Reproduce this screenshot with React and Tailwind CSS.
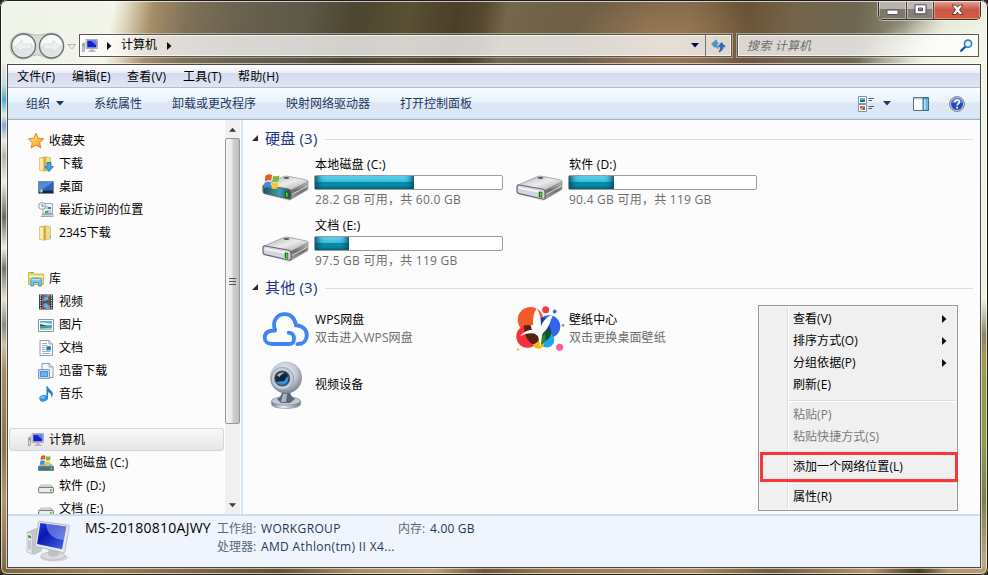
import clsx from "clsx";

const favorites = [
    { icon: DownloadFolderIcon, label: "下载" },
    { icon: DesktopIcon, label: "桌面" },
    { icon: RecentIcon, label: "最近访问的位置" },
    { icon: FolderIcon, label: "2345下载" },
];

const libraries = [
    { icon: VideoIcon, label: "视频" },
    { icon: PictureIcon, label: "图片" },
    { icon: DocumentIcon, label: "文档" },
    { icon: XunleiIcon, label: "迅雷下载" },
    { icon: MusicIcon, label: "音乐" },
];

const drives = [
    { icon: SmallSystemDriveIcon, label: "本地磁盘 (C:)" },
    { icon: SmallDriveIcon, label: "软件 (D:)" },
    { icon: SmallDriveIcon, label: "文档 (E:)" },
];

const disks = [
    { name: "本地磁盘 (C:)", info: "28.2 GB 可用，共 60.0 GB", used: 53, system: true },
    { name: "软件 (D:)", info: "90.4 GB 可用，共 119 GB", used: 24.2 },
    { name: "文档 (E:)", info: "97.5 GB 可用，共 119 GB", used: 18.3 },
];

const others = [
    { icon: CloudIcon, name: "WPS网盘", info: "双击进入WPS网盘" },
    { icon: WallpaperIcon, name: "壁纸中心", info: "双击更换桌面壁纸" },
    { icon: WebcamIcon, name: "视频设备" },
];

/* ---------- small icons ---------- */

function ComputerIcon() {
    return (
        <svg width="16" height="16" viewBox="0 0 16 16">
            <path d="M.5 5.5l2-.7v8.4l-2 .5z" fill="#d5d8da" stroke="#8b9094" strokeWidth=".7" />
            <path d="M1 6.6h1v1.6H1z" fill="#3fae2a" />
            <path d="M4 1.5h11.5v9H4z" fill="#e3e5e8" stroke="#9aa0a8" strokeWidth=".8" />
            <path d="M5.2 2.6h9.2v6.8H5.2z" fill="#1224c8" />
            <path d="M8.5 2.6h5.9v5z" fill="#5f82ee" />
            <path d="M8.5 10.8h3v1.7h-3z" fill="#b4b8bd" />
            <path d="M6.5 12.5h7v1.2h-7z" fill="#9da2a8" />
        </svg>
    );
}

function StarIcon() {
    return (
        <svg width="16" height="16" viewBox="0 0 16 16">
            <defs>
                <linearGradient id="star" x1="0" y1="0" x2="1" y2="1">
                    <stop offset="0" stopColor="#ffe9a0" />
                    <stop offset=".5" stopColor="#ffc44a" />
                    <stop offset="1" stopColor="#f58a1c" />
                </linearGradient>
            </defs>
            <path d="M8 .3l2.2 5 5.5.6-4.1 3.6 1.2 5.5L8 12.2l-4.8 2.8 1.2-5.5L.3 5.9l5.5-.6z" fill="url(#star)" stroke="#e0761a" strokeWidth=".9" strokeLinejoin="round" />
        </svg>
    );
}

function FolderShape() {
    return (
        <>
            <path d="M1.5 1.8L8 .8l4.5 1v12L6 15.2l-4.5-1z" fill="#e3c565" stroke="#c5a445" strokeWidth=".6" />
            <path d="M1.7 2L5.5 3v11.7l-3.8-.8z" fill="#f9eba8" />
            <path d="M5.6 3L8 1.2V14l-2.4.9z" fill="#d0ac48" />
            <path d="M8 1.6h4.3v11.9L8 14.4z" fill="#f1dc8a" />
        </>
    );
}

function FolderIcon() {
    return (
        <svg width="16" height="16" viewBox="0 0 16 16">
            <FolderShape />
            <path d="M11.8 10.5h1v3h-1z" fill="#6fb7dc" />
        </svg>
    );
}

function DownloadFolderIcon() {
    return (
        <svg width="16" height="16" viewBox="0 0 16 16">
            <FolderShape />
            <path d="M9 6.5h4v4.2h2.3L11 15.6l-4.2-4.9H9z" fill="#3ba5e6" stroke="#1b6bac" strokeWidth=".8" />
        </svg>
    );
}

function DesktopIcon() {
    return (
        <svg width="16" height="16" viewBox="0 0 16 16">
            <path d="M.5 2.5h15v12H.5z" fill="#2c62be" stroke="#7d8ba0" />
            <path d="M1 3h14L4 11H1z" fill="#4e8be0" />
            <path d="M1 11.5h14V14H1z" fill="#20262f" />
            <circle cx="3" cy="12" r="1.7" fill="#6ac0e8" />
            <path d="M3 11h1.5v1.5H3z" fill="#f3d34a" />
        </svg>
    );
}

function RecentIcon() {
    return (
        <svg width="16" height="16" viewBox="0 0 16 16">
            <path d="M5 1.5h9.5v11H5z" fill="#eff4f8" stroke="#8d979f" strokeWidth=".8" />
            <path d="M6 4h4v3H6zM8 8h5v3H8z" fill="#a9cfe4" />
            <path d="M10 5h3v2h-3z" fill="#2b85c4" />
            <path d="M7 9h3v2H7z" fill="#4ba65c" />
            <circle cx="4" cy="4" r="3.4" fill="#f7f7f7" stroke="#8c959c" strokeWidth=".9" />
            <path d="M4 2v2.2h2" stroke="#666" strokeWidth=".8" fill="none" />
            <path d="M4 12.2l1.2-1.3h9L15.5 13v2H2.5z" fill="#a2a8ab" />
            <path d="M3 13h12v.8H3z" fill="#e4e7e8" />
        </svg>
    );
}

function LibraryIcon() {
    return (
        <svg width="16" height="16" viewBox="0 0 16 16">
            <path d="M.5 1.5h5l1.3 1.6h8.7v10.4H.5z" fill="#eed271" stroke="#cdaa43" strokeWidth=".8" />
            <path d="M1 4.5h14v2H1z" fill="#fbefb2" />
            <path d="M2.5 1.5h3" stroke="#58b947" />
            <path d="M2.8 15V9.5c0-1.6.8-2.4 2.2-2.4h6.2c1.4 0 2.3.8 2.3 2.4V15h-3v-3.5H5.8V15z" fill="#72c3e9" stroke="#3b8fbf" strokeWidth=".8" />
            <path d="M3.5 8.7h9" stroke="#c9ecfb" />
        </svg>
    );
}

function VideoIcon() {
    return (
        <svg width="16" height="16" viewBox="0 0 16 16">
            <path d="M1 .5h14v15H1z" fill="#2b3a46" />
            <path d="M4 1h8v14H4z" fill="#47a7e0" />
            <path d="M4 1h3l2 2 3-1v5H8L4 5zM4 9h8v3l-3 1-1 2H4z" fill="#a6493f" />
            <path d="M6 3h4v3H6zM5 11l3-2 3 3-1 2H7z" fill="#58b5e9" />
            <path d="M4 7.4h8v1.2H4z" fill="#223240" />
            <path d="M2.5 1.2v14M13.5 1.2v14" stroke="#eef3f5" strokeWidth="1.3" strokeDasharray="1.2 1.2" />
        </svg>
    );
}

function PictureIcon() {
    return (
        <svg width="16" height="16" viewBox="0 0 16 16">
            <path d="M.5 2.5h15v12H.5z" fill="#fdfdfd" stroke="#8f979c" />
            <path d="M2 4h12v5H2z" fill="#5db1ea" />
            <path d="M2 6c3-1.4 5 .2 12 1v2H2z" fill="#e4f3f6" />
            <path d="M2 7.2c3 0 5 1.7 12 1.3v1H2z" fill="#1d5c52" />
            <path d="M2 9.3h12V13H2z" fill="#3d968a" />
            <path d="M2 11.5l12-1V13H2z" fill="#93d3d0" />
        </svg>
    );
}

function DocumentIcon() {
    return (
        <svg width="16" height="16" viewBox="0 0 16 16">
            <path d="M2 .5h9l3.5 3.5v11.5H2z" fill="#fdfdfd" stroke="#8a939a" strokeWidth=".9" />
            <path d="M11 .5V4h3.5" fill="#dfe5ea" stroke="#8a939a" strokeWidth=".8" />
            <path d="M4 3.5h5M4 5.5h5M4 7.5h3.5M4 9.5h3.5M4 11.5h8.5M4 13.5h8.5" stroke="#8da6be" strokeWidth=".9" />
            <path d="M8.5 6.2h4.3v4H8.5z" fill="#226ebb" />
            <path d="M8.5 8.7h4.3v1.5H8.5z" fill="#3d8f86" />
        </svg>
    );
}

function XunleiIcon() {
    return (
        <svg width="16" height="16" viewBox="0 0 16 16">
            <path d="M4 .5h7.5L15 4v10.5H4z" fill="#f5f8fb" stroke="#7a95b0" strokeWidth=".9" />
            <path d="M11 .5V4h4" fill="#dfe8f1" stroke="#7a95b0" strokeWidth=".8" />
            <path d="M.6 6.6h10.8v8.8H.6z" fill="#e8f2fb" stroke="#6086ad" strokeWidth=".9" />
            <path d="M2.3 8.4h7.4v5.2H2.3z" fill="#69b2ee" stroke="#2d74b8" strokeWidth=".8" />
        </svg>
    );
}

function MusicIcon() {
    return (
        <svg width="16" height="16" viewBox="0 0 16 16">
            <ellipse cx="5.6" cy="12.3" rx="4.3" ry="3.3" fill="#2b97dd" transform="rotate(-12 5.6 12.3)" />
            <ellipse cx="4.8" cy="11.4" rx="2.2" ry="1.2" fill="#86cbf2" />
            <path d="M8.5.3h1.3c.3 2.8 4.6 4 5 7.2.2 1.7-.4 3-1.6 4.6.6-3.3-.6-5.2-3.2-5.9v6.3H8.5z" fill="#2384cc" />
        </svg>
    );
}

function Flag() {
    return (
        <>
            <path d="M0 1.2C2-.3 3.3-.3 5 .6L4.4 5C2.7 4.2 1.4 4.3-.6 5.6z" fill="#e35a2b" />
            <path d="M5.8.9c1.6.9 3 .8 4.9 0L10 5.3c-1.8.8-3.2.8-4.8 0z" fill="#79b93c" />
            <path d="M-.8 6.5c2-1.3 3.3-1.2 5-.4l-.6 4.4c-1.7-.9-3-.8-5 .4z" fill="#3d8fd6" />
            <path d="M5 6.3c1.6.8 3 .8 4.9 0l-.7 4.4c-1.8.8-3.2.8-4.8 0z" fill="#f6c732" />
        </>
    );
}

function SmallSystemDriveIcon() {
    return (
        <svg width="16" height="16" viewBox="0 0 16 16">
            <path d="M2.5 8.5h11L15.6 12v3.4H.4V12z" fill="#9fb8bf" />
            <path d="M.4 11.5h15.2v4H.4z" fill="#3a7888" stroke="#68747a" strokeWidth=".7" />
            <path d="M12.5 12.5h1.6v2.2h-1.6z" fill="#5edb2f" />
            <g transform="translate(3 .3) scale(.9)">
                <Flag />
            </g>
        </svg>
    );
}

function SmallDriveIcon() {
    return (
        <svg width="16" height="16" viewBox="0 0 16 16">
            <path d="M3 7h10l2.3 3H.7z" fill="#e2e3e4" stroke="#a3a5a7" strokeWidth=".7" />
            <rect x=".6" y="9.4" width="14.8" height="5.4" rx="1.2" fill="#ececee" stroke="#6c6f72" strokeWidth="1" />
            <path d="M12 11h1.6v2.5H12z" fill="#4cc22b" />
        </svg>
    );
}

/* ---------- large icons ---------- */

function DriveIcon({ system }) {
    return (
        <svg width="48" height="30" viewBox="0 0 48 30">
            <defs>
                <linearGradient id="driveTop" x1="0" y1="0" x2="1" y2="1">
                    <stop offset="0" stopColor="#a9aaac" />
                    <stop offset=".5" stopColor="#ececed" />
                    <stop offset="1" stopColor="#9c9d9f" />
                </linearGradient>
                <linearGradient id="driveSide" x1="0" y1="0" x2="0" y2="1">
                    <stop offset="0" stopColor="#c4c5c6" />
                    <stop offset=".5" stopColor="#6c6e70" />
                    <stop offset="1" stopColor="#a3a4a5" />
                </linearGradient>
                <linearGradient id="driveGlass" x1="0" y1="0" x2="1" y2="0">
                    <stop offset="0" stopColor="#23505b" />
                    <stop offset=".6" stopColor="#37a0b3" />
                    <stop offset="1" stopColor="#214851" />
                </linearGradient>
            </defs>
            <path d="M3 22l24 7L47 18l-3-3z" fill="#000" opacity=".12" />
            <path d="M2 13L21 4.8c2-.8 3.6-.8 5.5-.5l17 3.4c2 .5 2.8 1.3 2.5 2.5L30 19z" fill="url(#driveTop)" stroke="#808183" strokeWidth=".6" />
            <path d="M28.5 18.5L46 9.5v6.2c0 1-.4 1.6-1.5 2.2L29 27.2z" fill="url(#driveSide)" stroke="#777" strokeWidth=".5" />
            <path d="M30 22.5L45.5 14" stroke="#e4e5e6" strokeWidth=".9" />
            <path d="M1 14.4c0-1.2.8-1.6 2.3-1.4L26 17c2 .4 3 1 3 2.8v5.4c0 1.7-.8 2.2-2.6 1.8L3 21.6c-1.3-.3-2-.9-2-2.3z" fill={system ? "url(#driveGlass)" : "#d4d5e0"} stroke="#66686b" strokeWidth="1.2" />
            {!system && <path d="M3 15l22 4v2L3 17z" fill="#f4f4fa" />}
            <path d="M22.8 19.5l3.4.5v5.8l-3.4-.8z" fill="#124f0c" />
            <path d="M23.8 20.4l1.8.2v4.4l-1.8-.5z" fill="#58e325" />
            <ellipse cx="24.5" cy="6" rx="2.8" ry="1" fill="#55575a" />
            {system && (
                <g transform="translate(3.5 2.3) scale(1.3)">
                    <Flag />
                </g>
            )}
        </svg>
    );
}

function CloudIcon() {
    return (
        <svg width="48" height="48" viewBox="0 0 48 48" fill="none" stroke="#3f83f5" strokeWidth="3.8" strokeLinecap="round">
            <path d="M13.2 25C9.5 17 15 9.1 22.5 9.1c7 0 10.3 4.6 11.6 11.2 6.9.2 10.9 4.7 10.7 10.2-.2 5.8-4.4 8.5-9.4 8.7" />
            <path d="M13 25.5c-6 0-10.3 2.3-10.3 7.3 0 4 3 6.2 7.3 6.2h17c3 0 5-1.8 5-5.1 0-4.3-2.2-6.1-5.3-6.3" />
        </svg>
    );
}

function WallpaperIcon() {
    return (
        <svg width="49" height="48" viewBox="0 0 49 48">
            <circle cx="14.5" cy="14.8" r="12.8" fill="#f15a29" />
            <circle cx="33" cy="21.5" r="11.3" fill="#2f64ec" />
            <circle cx="11.5" cy="31.5" r="11.2" fill="#f2313c" />
            <circle cx="30.8" cy="35" r="7.5" fill="#1ba7f5" />
            <circle cx="22.5" cy="38" r="5.8" fill="#f8b714" />
            <path d="M8 20.5c7-1 12 1.500 16 7.500l-1.500 8c-2 2-4 3-6 3.300C11 36 8 28 8 20.500z" fill="#5a210f" />
            <path d="M24 13.5c6-3 8 0 11 12-2 3-6 5-9 5l-4-6z" fill="#143f92" />
            <path d="M25 29c3-4 8-4.500 10-3.500 1 5-2 9-7 11.500z" fill="#145525" />
            <path d="M24 33l5-4c2 5 0 9-4 11z" fill="#27872b" />
            <path d="M24.300 41.500c-.8-3.500-1.500-7-2.300-10.500-3.700-2-6.600-5.500-7.300-10.500 1.300-.3 1.800-.5 2.300-.5-.3-6.500.9-12.500 3.600-16.700 2.900 4.200 4.700 10.700 4.400 18C27 15.500 31.500 11 37 10c-3 6-3.500 12.500-10 18-1.400 2.300-1.300 5.500-1.700 8.500-.2 2-.5 3.500-1 5z" fill="#fff" />
            <path d="M4.200 31.500c3.500-5 9.500-8 17-5.500l1.300 3.500c-6.500-2-12.500-1.500-18.300 2z" fill="#fff" />
            <circle cx="29.7" cy="4.8" r="3.5" fill="#f33b43" />
            <circle cx="38.7" cy="6.5" r="1.9" fill="#3768ee" />
            <circle cx="47" cy="20.3" r="1.3" fill="#43b53b" />
            <circle cx="43.6" cy="42.2" r="3.5" fill="#f45da2" />
            <circle cx="2" cy="44.6" r="1.2" fill="#f5b81c" />
        </svg>
    );
}

function WebcamIcon() {
    return (
        <svg width="48" height="50" viewBox="0 0 48 50">
            <defs>
                <radialGradient id="camBody" cx=".45" cy=".35" r=".65">
                    <stop offset="0" stopColor="#f2f4f7" />
                    <stop offset=".6" stopColor="#bfc7d2" />
                    <stop offset="1" stopColor="#788394" />
                </radialGradient>
                <linearGradient id="camBase" x1="0" y1="0" x2="1" y2="0">
                    <stop offset="0" stopColor="#6d7786" />
                    <stop offset=".4" stopColor="#edf0f4" />
                    <stop offset="1" stopColor="#6f7988" />
                </linearGradient>
            </defs>
            <path d="M9.5 41v3c0 6 29 6 29 0v-3z" fill="url(#camBase)" stroke="#87909d" strokeWidth=".6" />
            <ellipse cx="24" cy="41" rx="14.5" ry="4.2" fill="#c3cbd5" stroke="#7c8694" strokeWidth=".7" />
            <path d="M20 30h8c0 5 2 7 5 9l-5 4h-9l-4-4c4-2 5-5 5-9z" fill="#5b6778" />
            <path d="M21 34h4l-1 8h-5z" fill="#aab5c4" />
            <circle cx="24" cy="17.5" r="16" fill="url(#camBody)" />
            <circle cx="20.5" cy="18.5" r="11.2" fill="#c0c8d3" stroke="#8d97a6" strokeWidth=".7" />
            <circle cx="20.2" cy="18.5" r="8.6" fill="#596371" stroke="#eceff3" strokeWidth=".7" />
            <circle cx="20.2" cy="18.5" r="7" fill="#162b42" />
            <path d="M14 21.5c3 1 8-1 12.5-5.5.8 5-2 9-6 9-3.5 0-5.500-1.500-6.500-3.500z" fill="#2f91df" />
            <circle cx="20.5" cy="18.5" r="2.8" fill="#0f2236" />
            <path d="M15 15.5c1.500-2.500 5-3.500 7.500-2.500-2 .5-4 2-5 4z" fill="#a9b8c6" />
        </svg>
    );
}

function LargeComputerIcon() {
    return (
        <svg width="46" height="42" viewBox="0 0 46 42">
            <defs>
                <linearGradient id="screen" x1="0" y1="0" x2="1" y2="1">
                    <stop offset="0" stopColor="#2740d8" />
                    <stop offset=".35" stopColor="#0617b4" />
                    <stop offset="1" stopColor="#4b6be5" />
                </linearGradient>
            </defs>
            <path d="M1 12l9-4 6 3v20l-8 4-7-3z" fill="#c5c8cc" />
            <path d="M1 12l5 2v20l-5-2z" fill="#e7e9eb" stroke="#a5a8ac" strokeWidth=".5" />
            <path d="M2 15l3 1v2.500l-3-1z" fill="#3f9a31" />
            <path d="M2 20l3 1v9l-3-1z" fill="#c3c6ca" />
            <ellipse cx="28" cy="37.5" rx="14" ry="4" fill="#000" opacity=".12" />
            <ellipse cx="27" cy="36" rx="12" ry="4" fill="#d9dbde" stroke="#aaadb1" strokeWidth=".6" />
            <path d="M23 28h9l1 7c-3 2-8 2-11 0z" fill="#bfc2c6" />
            <path d="M13.5 1.3l29 3.9c.8.2 1 .6.8 1.4l-4.5 25.2c-.2 1-.6 1.2-1.5 1L10 26.5c-.8-.2-1-.6-.9-1.4l3.4-23c.1-.7.4-.9 1-.8z" fill="#e5e7ea" stroke="#a4a8ad" strokeWidth=".7" />
            <path d="M14.3 3l26 3.6-4.2 22.7-25-5.3z" fill="url(#screen)" />
            <path d="M20 3.8l20.3 2.8-2.4 13.2C29 20 21 15 20 3.8z" fill="#b7c8ff" opacity=".45" />
        </svg>
    );
}

/* ---------- window chrome ---------- */

function WindowButtons() {
    return (
        <div className="ml-auto mr-[7px] flex h-5 w-[103px] overflow-hidden rounded-b-[5px] border border-t-0 border-[#33302b] shadow-[0_0_0_1px_#ffffff77]">
            <div className="flex w-7 items-center justify-center border-r border-[#46423b] bg-linear-to-b from-[#b9b2a9] from-45% to-[#7e776c] to-50% shadow-[inset_0_0_0_1px_#ffffff66]">
                <svg width="14" height="7" viewBox="0 0 14 7" className="mt-1.5">
                    <rect x="1" y="1" width="11" height="4.5" rx=".8" fill="#fff" stroke="#4b4c5c" />
                </svg>
            </div>
            <div className="flex w-[27px] items-center justify-center border-r border-[#46423b] bg-linear-to-b from-[#bcb8b0] from-45% to-[#848076] to-50% shadow-[inset_0_0_0_1px_#ffffff66]">
                <svg width="13" height="11" viewBox="0 0 13 11">
                    <path d="M1 .8h11v9H1zM4.5 4v2.7h4V4z" fill="#fff" fillRule="evenodd" stroke="#4b4c5c" />
                </svg>
            </div>
            <div className="flex flex-1 items-center justify-center bg-linear-to-b from-[#e3a498] from-5% via-[#cb5843] via-50% to-[#d9593a] shadow-[inset_0_0_0_1px_#ffffff55]">
                <svg width="13" height="12" viewBox="0 0 13 12">
                    <path d="M1 1h3.5l2 2.2L8.5 1H12L8.5 5.7l3.5 4.8H8.5l-2-2.3-2 2.3H1l3.5-4.8z" fill="#fff" stroke="#5a3d42" strokeLinejoin="round" />
                </svg>
            </div>
        </div>
    );
}

function NavButtons() {
    return (
        <svg width="68" height="28" viewBox="0 0 68 28">
            <path d="M14 1C20 1 22 3 28 3S38 1 42 1c8 0 13 6 13 13s-5 13-13 13c-6 0-8-4-14-4s-8 4-14 4C6 27 1 21 1 14S6 1 14 1z" fill="#c3c8bf" opacity=".55" stroke="#949990" />
            <circle cx="14.5" cy="14" r="12" fill="#dfe6e5" stroke="#687178" strokeWidth="1.3" />
            <circle cx="42.5" cy="14" r="12" fill="#dfe6e5" stroke="#687178" strokeWidth="1.3" />
            <path d="M4 13.5C4 7 9 3.3 14.5 3.3S25 7 25 13.5zM32 13.5c0-6.500 5-10.200 10.500-10.200S53 7 53 13.500z" fill="#f7faf8" />
            <path d="M6 14.5l7-6v3.5h9.5v5H13v3.5zM51 14.5l-7-6v3.5h-9.5v5H44v3.5z" fill="#eef1ef" stroke="#d3dad7" strokeWidth=".8" />
            <path d="M59 12.5h7.5l-3.7 4.5z" fill="#f4f6ee" stroke="#a9ada2" strokeWidth=".9" />
        </svg>
    );
}

function RightArrow({ className }) {
    return (
        <svg width="5" height="8" viewBox="0 0 5 8" className={className}>
            <path d="M0 0l4.5 4L0 8z" fill="#111" />
        </svg>
    );
}

function DownArrow({ className }) {
    return (
        <svg width="8" height="5" viewBox="0 0 8 5" className={className}>
            <path d="M0 0h8L4 4.5z" fill="currentColor" />
        </svg>
    );
}

function AddressRow() {
    return (
        <div className="flex h-[34px] items-start pl-[9px]">
            <div className="mt-0.5">
                <NavButtons />
            </div>
            <div className="ml-0.5 mt-[4px] flex h-[23px] w-[653px] border border-[#5b564c] bg-white/75 shadow-[0_0_0_1px_#ffffff66,inset_0_0_0_1px_#ffffffaa]">
                <div className="flex flex-1 items-center pl-0.5">
                    <ComputerIcon />
                    <RightArrow className="ml-[9px]" />
                    <span className="-mt-px ml-[9px] w-9">计算机</span>
                    <RightArrow className="ml-[10px]" />
                    <DownArrow className="ml-auto mr-[6px] text-[#000060]" />
                </div>
                <div className="flex w-[26px] items-center justify-center border-l border-[#7a756c]">
                    <svg width="15" height="14" viewBox="0 0 15 14">
                        <path d="M5.5.8L.6 4.8l3 3.6V6.2c.6 1.4 1.5 2.5 3.3 3.3-.8-1.500-1-3-.9-4.900h1.700L5.800 2.800z" fill="#3f9de2" stroke="#2b71b5" strokeWidth=".5" />
                        <path d="M10.5 3.5L7 7.8h2.2c.2 2-.2 3.500-1.400 5.200 3-.6 4.300-2.700 4.400-5.200h2.200z" fill="#2a6fc0" stroke="#1b4c93" strokeWidth=".5" />
                    </svg>
                </div>
            </div>
            <div className="ml-[5px] mt-[4px] flex h-[23px] w-[242px] items-center border border-[#5b564c] bg-white/75 pl-[9px] pr-[5px] shadow-[0_0_0_1px_#ffffff66,inset_0_0_0_1px_#ffffffaa]">
                <span className="italic tracking-[0.2px] text-[#6d6d6d]">搜索 计算机</span>
                <svg width="13" height="13" viewBox="0 0 13 13" className="ml-auto">
                    <path d="M5.5 7.5L1.2 11.8" stroke="#20509f" strokeWidth="2.3" strokeLinecap="round" />
                    <circle cx="8" cy="4.7" r="3.6" fill="#e3f3fc" stroke="#2c86cb" strokeWidth="1.7" />
                </svg>
            </div>
        </div>
    );
}

function MenuBar() {
    return (
        <div className="flex h-[23px] shrink-0 items-center gap-4 border-b border-[#b5bbd4] bg-[linear-gradient(#ffffff,#eceff8_35%,#d4dbed_36%,#e1e6f6)] pl-[9px] pt-[2px] tracking-[0.2px]">
            <span className="w-[39px]">文件(F)</span>
            <span className="w-[39px]">编辑(E)</span>
            <span className="w-[40px]">查看(V)</span>
            <span className="w-[39px]">工具(T)</span>
            <span>帮助(H)</span>
        </div>
    );
}

function Toolbar() {
    return (
        <div className="flex h-8 shrink-0 items-center border-b border-[#9fb0ca] bg-[linear-gradient(#fafdff,#e8f1fb_46%,#dce6f4_48%,#dde8f6_92%,#cfdcec)] pl-[18px] text-[#1e395b]">
            <span>组织</span>
            <DownArrow className="ml-[6px]" />
            <span className="ml-[30px]">系统属性</span>
            <span className="ml-[30px]">卸载或更改程序</span>
            <span className="ml-[30px]">映射网络驱动器</span>
            <span className="ml-[30px]">打开控制面板</span>
            <svg width="17" height="16" viewBox="0 0 17 16" className="ml-auto">
                <path d="M.5.5h8v7h-8zM.5 8.5h8v7h-8z" fill="#fff" stroke="#8092a9" />
                <path d="M2 2h5v2H2z" fill="#55b5df" />
                <path d="M2 4h5v2H2z" fill="#2f6d57" />
                <path d="M2 10h2.5v2H2z" fill="#e54b35" />
                <path d="M4.5 10H7v2H4.5z" fill="#54b242" />
                <path d="M2 12h2.5v2H2z" fill="#f2b520" />
                <path d="M4.5 12H7v2H4.5z" fill="#bb3454" />
                <path d="M10.5 2.5H16M10.5 4.5h3.5M10.5 10.5H16M10.5 12.5h3.5" stroke="#4c5c73" />
            </svg>
            <DownArrow className="ml-[8px]" />
            <svg width="16" height="14" viewBox="0 0 16 14" className="ml-[22px]">
                <path d="M.5.5h15v13H.5z" fill="#fff" stroke="#5b7189" />
                <path d="M1 1h14v1.5H1z" fill="#c3d3e3" />
                <path d="M10 1h5.5v12.5H10z" fill="#65bcdc" stroke="#386e8e" />
                <path d="M11 2h1.5v10.5H11z" fill="#b7e3f1" />
            </svg>
            <svg width="16" height="16" viewBox="0 0 16 16" className="ml-5 mr-[15px]">
                <circle cx="8" cy="8" r="7.4" fill="#c5cbd7" stroke="#79808e" />
                <circle cx="8" cy="8" r="6" fill="#2549b4" />
                <path d="M2.6 7a5.4 5 0 0 1 10.8 0z" fill="#5b80da" />
                <path d="M5.8 6.3c0-1.6 1-2.3 2.3-2.3s2.3.8 2.3 2c0 1.700-2.200 1.700-2.200 3.500" fill="none" stroke="#fff" strokeWidth="1.6" />
                <path d="M7.3 10.8H9v1.6H7.3z" fill="#fff" />
            </svg>
        </div>
    );
}

/* ---------- navigation pane ---------- */

function NavItem({ icon: Icon, label, root, selected }) {
    return (
        <div
            className={clsx(
                "ml-px mr-px flex h-[23px] shrink-0 items-center rounded-[3px] border",
                root ? "pl-[18px]" : "pl-[28px]",
                selected ? "border-[#d6d6d6] bg-linear-to-b from-[#f9f9f9] to-[#e5e5e5]" : "border-transparent"
            )}
        >
            <Icon />
            <span className="ml-[5px] tracking-[0.05px]">{label}</span>
        </div>
    );
}

function NavPane() {
    return (
        <div className="flex w-[217px] shrink-0 flex-col overflow-hidden pt-[9px]">
            <NavItem icon={StarIcon} label="收藏夹" root />
            {favorites.map((item) => (
                <NavItem key={item.label} {...item} />
            ))}
            <div className="h-[23px] shrink-0" />
            <NavItem icon={LibraryIcon} label="库" root />
            {libraries.map((item) => (
                <NavItem key={item.label} {...item} />
            ))}
            <div className="h-[23px] shrink-0" />
            <NavItem icon={ComputerIcon} label="计算机" root selected />
            {drives.map((item) => (
                <NavItem key={item.label} {...item} />
            ))}
        </div>
    );
}

function Scrollbar() {
    return (
        <div className="flex w-[15px] shrink-0 flex-col items-center bg-[#f0f0f0] text-[#3a3a3a]">
            <div className="flex h-[18px] items-center">
                <DownArrow className="w-[7px] rotate-180" />
            </div>
            <div className="flex h-[286px] w-[15px] flex-col items-center justify-center gap-[2px] rounded-[2px] border border-[#979797] bg-[linear-gradient(90deg,#f5f5f5,#e9e9eb_45%,#cfcfd3_55%,#bfbfc4)]">
                <div className="h-px w-[7px] bg-[#555]" />
                <div className="h-px w-[7px] bg-[#555]" />
                <div className="h-px w-[7px] bg-[#555]" />
            </div>
            <div className="mt-auto flex h-[17px] items-center">
                <DownArrow className="w-[7px]" />
            </div>
        </div>
    );
}

/* ---------- content ---------- */

function GroupHeader({ title }) {
    return (
        <div className="flex h-6 items-center pl-[9px] pr-[7px]">
            <svg width="6" height="6" viewBox="0 0 6 6" className="-mt-0.5">
                <path d="M6 0v6H0z" fill="#2a2a2a" />
            </svg>
            <span className="-mt-[3px] ml-[7px] w-[53px] whitespace-nowrap text-[15px] tracking-[0.2px] text-[#1e3287]">{title}</span>
            <div className="ml-[7px] h-px flex-1 bg-[#dedede]" />
        </div>
    );
}

function Disk({ name, info, used, system }) {
    return (
        <div className="flex h-[61px] pl-[19px]">
            <div className="w-[48px] shrink-0 pt-[18px]">
                <DriveIcon system={system} />
            </div>
            <div className="ml-[4px] w-[189px] shrink-0 pt-px">
                <div className="h-5 pl-px leading-5 tracking-[0.2px]">{name}</div>
                <div className="h-[15px] rounded-[2px] border border-[#9c9c9c] bg-white">
                    <div
                        className="h-full bg-[linear-gradient(#62cfee,#3cc0e2_42%,#0a8aa6_48%,#0797b3_80%,#067e98)] shadow-[inset_7px_-3px_6px_-4px_#055068,inset_-7px_-3px_6px_-4px_#055068]"
                        style={{ width: `${used}%` }}
                    />
                </div>
                <div className="h-5 whitespace-nowrap pl-px leading-5 tracking-[0.25px] text-[#6d6d6d]">{info}</div>
            </div>
        </div>
    );
}

function OtherItem({ icon: Icon, name, info }) {
    return (
        <div className="flex h-[56px] items-center pl-[19px]">
            <div className="w-[49px] shrink-0">
                <Icon />
            </div>
            <div className="ml-[4px] whitespace-nowrap leading-[18px] tracking-[0.1px]">
                <div>{name}</div>
                {info && <div className="text-[#6d6d6d]">{info}</div>}
            </div>
        </div>
    );
}

function Content() {
    return (
        <div className="flex-1 border-l-2 border-[#d9e6f3] pt-[7px]">
            <GroupHeader title="硬盘 (3)" />
            <div className="grid grid-cols-[254px_254px] pt-[3px]">
                {disks.map((disk) => (
                    <Disk key={disk.name} {...disk} />
                ))}
            </div>
            <GroupHeader title="其他 (3)" />
            <div className="grid grid-cols-[254px_254px] pt-px">
                {others.map((item) => (
                    <OtherItem key={item.name} {...item} />
                ))}
            </div>
        </div>
    );
}

function DetailsPane() {
    return (
        <div className="flex h-[53px] shrink-0 border-t-2 border-[#cfdcec] bg-[#f0f4fc] pl-[18px] text-[#1e395b]">
            <div className="pt-[4px]">
                <LargeComputerIcon />
            </div>
            <div className="ml-[13px] w-[132px] whitespace-nowrap pt-[2px] text-[14px] leading-5 tracking-[0.25px] text-black">MS-20180810AJWY</div>
            <div className="grid h-[40px] grid-cols-[44px_137px_32px_80px] whitespace-nowrap pt-[4px] leading-[18px] tracking-[0.35px]">
                <span className="tracking-normal text-[#5a6779]">工作组:</span>
                <span>WORKGROUP</span>
                <span className="tracking-normal text-[#5a6779]">内存:</span>
                <span className="tracking-[0.2px]">4.00 GB</span>
                <span className="tracking-normal text-[#5a6779]">处理器:</span>
                <span>AMD Athlon(tm) II X4...</span>
            </div>
        </div>
    );
}

/* ---------- context menu ---------- */

function MenuItem({ label, submenu, disabled }) {
    return (
        <div className={clsx("flex h-[22px] items-center pl-[32px] pr-[8px] tracking-[0.05px]", disabled && "text-[#7a7a7a]")}>
            <span>{label}</span>
            {submenu && <RightArrow className="ml-auto" />}
        </div>
    );
}

function MenuSeparator() {
    return (
        <div className="flex h-2 items-center pl-[28px]">
            <div className="mt-px h-[2px] flex-1 border-t border-[#dcdcdc] bg-white" />
        </div>
    );
}

function ContextMenu() {
    return (
        <div className="absolute left-[758px] top-[305px] h-[206px] w-[200px] border border-[#979797] bg-[#f0f0f0] bg-[linear-gradient(90deg,transparent_28px,#e0e0e0_28px,#e0e0e0_29px,#fff_29px,#fff_30px,transparent_30px)] p-[2px] shadow-[inset_0_0_0_1px_#f7f7f7]">
            <MenuItem label="查看(V)" submenu />
            <MenuItem label="排序方式(O)" submenu />
            <MenuItem label="分组依据(P)" submenu />
            <MenuItem label="刷新(E)" />
            <MenuSeparator />
            <MenuItem label="粘贴(P)" disabled />
            <MenuItem label="粘贴快捷方式(S)" disabled />
            <MenuSeparator />
            <MenuItem label="添加一个网络位置(L)" />
            <MenuSeparator />
            <MenuItem label="属性(R)" />
            <div className="absolute left-px top-[146px] h-[30px] w-[198px] border-[3px] border-[#fb3638]" />
        </div>
    );
}

/* blurred desktop showing through the glass frame */
function Glass() {
    return (
        <div className="absolute inset-0 bg-[#a3875c]">
            <div className="absolute inset-x-0 top-0 h-[66px] bg-[radial-gradient(ellipse_130px_60px_at_988px_66px,#f2f5e8_45%,transparent),radial-gradient(ellipse_90px_60px_at_665px_45px,#a07d55,transparent),linear-gradient(100deg,#eff4e8_0%,#f2f5e9_11.5%,#dcd4b8_13%,#a58d67_15.5%,#7f7159_19%,#6b6250_24%,#5c5747_31%,#4c4530_36%,#5a5034_41%,#4b3f28_46%,#55482f_48.5%,#74674a_51%,#6f6047_56%,#725f47_63%,#7d6649_69%,#6a5437_75%,#75644a_80%,#6d6651_86%,#8f8c77_91%,#dfe2d0_95%,#edf3e3_100%)]" />
            <div className="absolute left-0 top-[64px] h-[511px] w-2 bg-[linear-gradient(#e6e9db,#c9d8e0_4%,#4aaed0_7%,#e4e9e4_10%,#7fa9e0_12%,#e9ece0_15%,#b5b4a7_18%,#efefe3_23%,#6d6b60_30%,#efefe0_36%,#77766c_40%,#e6e4d0_46%,#8c8b80_51%,#c8c3a8_55%,#a98f64_60%,#8c774f_75%,#b39a6d_85%,#7d6842)]" />
            <div className="absolute right-0 top-[64px] h-[511px] w-2 bg-[linear-gradient(#f0f5e6,#e9f2e2_42%,#eaf2df_46%,#8a8567_53%,#9b9a56_57%,#8c9a56_75%,#7d7f48_85%,#bba781_97%)]" />
            <div className="absolute inset-x-0 bottom-0 h-2 bg-[linear-gradient(90deg,#7b6640,#9b8258_10%,#624f34_28%,#a68e62_36%,#b99e72_44%,#6c5639_49%,#927849_55%,#a98c62_70%,#6f5d3a_78%,#b2946d_88%,#453c1b_93%,#b39871_96%)]" />
        </div>
    );
}

export default function App() {
    return (
        <div className="relative h-[575px] w-[988px] overflow-hidden bg-[#24201c] font-['Open_Sans','Noto_Sans_CJK_SC',sans-serif] text-[12px] leading-4 text-black">
            <div className="relative flex h-full w-full flex-col overflow-hidden rounded-[7px]">
                <Glass />
                <div className="relative flex h-[30px] shrink-0">
                    <WindowButtons />
                </div>
                <div className="relative shrink-0">
                    <AddressRow />
                </div>
                <div className="relative mx-[7px] flex h-[504px] flex-col border border-[#4b483f] bg-[#fcfcfc] shadow-[0_0_0_1px_#ffffff99]">
                    <MenuBar />
                    <Toolbar />
                    <div className="flex min-h-0 flex-1">
                        <NavPane />
                        <Scrollbar />
                        <div className="w-px shrink-0" />
                        <Content />
                    </div>
                    <DetailsPane />
                </div>
                <div className="pointer-events-none absolute inset-0 rounded-[7px] border border-[#201c19] shadow-[inset_0_0_0_1px_#ffffffb0]" />
            </div>
            <ContextMenu />
        </div>
    );
}
